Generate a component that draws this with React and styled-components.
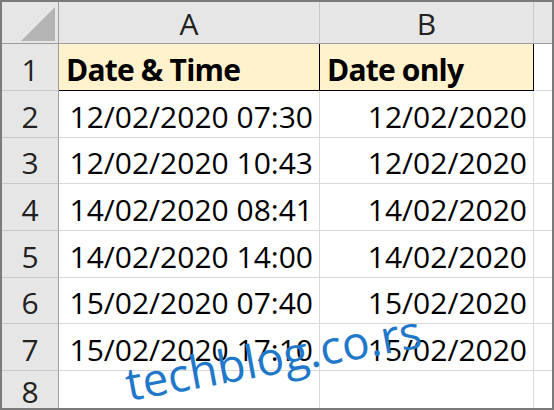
import React from "react";
import styled, { createGlobalStyle, css } from "styled-components";

const GlobalStyle = createGlobalStyle`
	html, body {
		margin: 0;
		padding: 0;
		background: #fff;
	}
`;

const FONT = `"Open Sans", "Noto Sans", sans-serif`;
const HEAD_BG = "#e6e6e6";
const HEAD_EDGE = "#9e9e9e";
const HEAD_SEP = "#c8c8c8";
const GRID = "#d9d9d9";

const Frame = styled.div`
	position: relative;
	width: 554px;
	height: 410px;
	box-sizing: border-box;
	border: 2px solid #7a7a7a;
	overflow: hidden;
	font-family: ${FONT};
	font-size: 30px;
	line-height: 30px;
	color: #000;
`;

const Sheet = styled.div`
	display: grid;
	grid-template-columns: 57px 261px 214px 1fr;
	grid-template-rows: 42px 47px 47px 46px 47px 47px 46px 47px 1fr;
	height: 100%;
	> * {
		box-sizing: border-box;
		min-width: 0;
	}
`;

const Corner = styled.div`
	display: flex;
	justify-content: flex-end;
	align-items: flex-end;
	padding: 0 2px 2px 0;
	background: ${HEAD_BG};
	border-right: 1px solid ${HEAD_EDGE};
	border-bottom: 1px solid ${HEAD_EDGE};
`;

const ColHead = styled.div`
	display: flex;
	justify-content: center;
	align-items: flex-end;
	padding-bottom: 4px;
	background: ${HEAD_BG};
	color: #222;
	border-bottom: 1px solid ${HEAD_EDGE};
	border-right: ${(p) => (p.$last ? "none" : `1px solid ${HEAD_SEP}`)};
`;

const RowHead = styled.div`
	display: flex;
	justify-content: center;
	align-items: flex-end;
	padding-bottom: ${(p) => (p.$last ? "1px" : "5px")};
	background: ${HEAD_BG};
	color: #222;
	border-right: 1px solid ${HEAD_EDGE};
	border-bottom: ${(p) => (p.$last ? "none" : `1px solid ${HEAD_SEP}`)};
`;

const Cell = styled.div`
	display: flex;
	align-items: flex-end;
	justify-content: ${(p) => (p.$right ? "flex-end" : "flex-start")};
	padding: 0 6px 5px 7px;
	white-space: nowrap;
	border-right: ${(p) => (p.$lastCol ? "none" : `1px solid ${GRID}`)};
	border-bottom: ${(p) => (p.$lastRow ? "none" : `1px solid ${GRID}`)};
	${(p) =>
		p.$title &&
		css`
			background: #fff2cc;
			font-weight: 700;
			letter-spacing: -0.8px;
			border-right: 1px solid #000;
			border-bottom: 1px solid #000;
		`}
`;

const Watermark = styled.span`
	position: absolute;
	left: 127px;
	top: 358px;
	font-family: ${FONT};
	font-size: 46px;
	line-height: 46px;
	color: #1f78c9;
	white-space: nowrap;
	transform-origin: 0 41px;
	transform: rotate(-10.4deg);
	pointer-events: none;
`;

const rows = [
	["12/02/2020 07:30", "12/02/2020"],
	["12/02/2020 10:43", "12/02/2020"],
	["14/02/2020 08:41", "14/02/2020"],
	["14/02/2020 14:00", "14/02/2020"],
	["15/02/2020 07:40", "15/02/2020"],
	["15/02/2020 17:10", "15/02/2020"],
];

function App() {
	return (
		<>
			<GlobalStyle />
			<Frame>
				<Sheet>
					<Corner>
						<svg width="35" height="34" viewBox="0 0 35 34">
							<polygon points="34,0 0,34 34,34" fill="#b4b4b4" />
						</svg>
					</Corner>
					<ColHead>A</ColHead>
					<ColHead>B</ColHead>
					<ColHead $last />

					<RowHead>1</RowHead>
					<Cell $title>Date &amp; Time</Cell>
					<Cell $title>Date only</Cell>
					<Cell $lastCol />

					{rows.map(([full, day], i) => (
						<React.Fragment key={full}>
							<RowHead>{i + 2}</RowHead>
							<Cell $right>{full}</Cell>
							<Cell $right>{day}</Cell>
							<Cell $lastCol />
						</React.Fragment>
					))}

					<RowHead $last>8</RowHead>
					<Cell $lastRow />
					<Cell $lastRow />
					<Cell $lastRow $lastCol />
				</Sheet>
				<Watermark>techblog.co.rs</Watermark>
			</Frame>
		</>
	);
}

export default App;
